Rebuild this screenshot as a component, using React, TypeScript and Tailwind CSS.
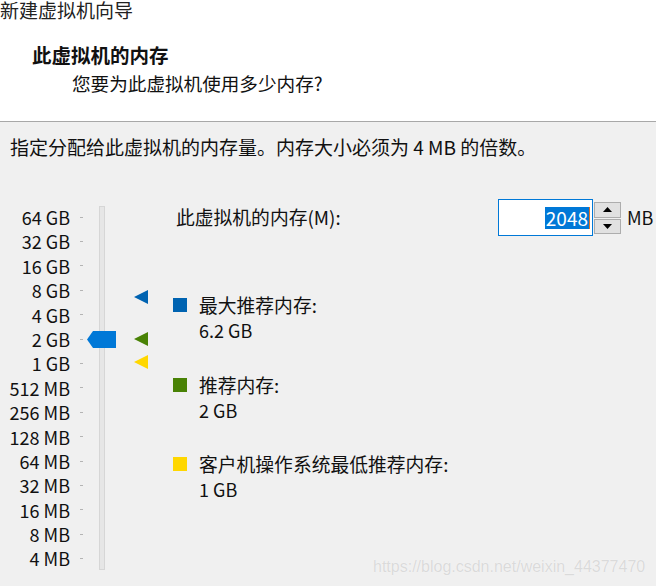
import React from "react";

const labels = [
  "64 GB", "32 GB", "16 GB", "8 GB", "4 GB", "2 GB", "1 GB",
  "512 MB", "256 MB", "128 MB", "64 MB", "32 MB", "16 MB", "8 MB", "4 MB",
];

function Tri({ color, top }: { color: string; top: number }) {
  return (
    <svg
      className="absolute left-[64px]"
      style={{ top }}
      width="14"
      height="14"
      viewBox="0 0 14 14"
    >
      <polygon points="0,7 14,0 14,14" fill={color} />
    </svg>
  );
}

function Legend({ color, title, value, mt }: { color: string; title: string; value: string; mt: string }) {
  return (
    <div className={`flex ${mt}`}>
      <div className={`w-[14px] h-[14px] mt-[5px] ${color}`} />
      <div className="ml-[12px] flex flex-col leading-[24.5px]">
        <span className="text-[18.8px] whitespace-nowrap">{title}</span>
        <span>{value}</span>
      </div>
    </div>
  );
}

export default function App() {
  return (
    <div
      className="relative w-[656px] h-[586px] overflow-hidden bg-[#f0f0f0] text-[18px] text-[#111]"
      style={{ fontFamily: '"Noto Sans CJK SC", "Noto Sans", sans-serif' }}
    >
      {/* header */}
      <div className="h-[122px] bg-white border-b border-[#a8a8a8] flex flex-col">
        <div className="leading-[20px] text-[19px] text-[#222]">新建虚拟机向导</div>
        <div className="mt-[23px] pl-[32px] leading-[24px] text-[19.5px] font-bold">此虚拟机的内存</div>
        <div className="mt-[4px] pl-[72px] leading-[24px] text-[18.6px]">您要为此虚拟机使用多少内存?</div>
      </div>

      <div className="mt-[13px] pl-[10px] leading-[24px] text-[19px] whitespace-nowrap">
        指定分配给此虚拟机的内存量。内存大小必须为 4 MB 的倍数。
      </div>

      <div className="flex mt-[45px] h-[368px]">
        {/* scale labels */}
        <div className="w-[70px] flex flex-col pt-px text-right">
          {labels.map((l) => (
            <div key={l} className="h-[24.4px] leading-[24.4px] whitespace-nowrap">
              {l}
            </div>
          ))}
        </div>

        {/* slider */}
        <div className="relative w-[103px] flex">
          <div className="flex flex-col pt-px pl-[10px]">
            {labels.map((l) => (
              <div key={l} className="h-[24.4px] flex items-center">
                <div className="w-[3px] h-px bg-[#b4b4b4]" />
              </div>
            ))}
          </div>
          <div className="ml-[16px] mt-[2px] w-[6px] h-[364px] border border-[#d6d6d6] bg-[#e6e6e6]" />
          {/* thumb */}
          <svg className="absolute left-[17px] top-[127px]" width="29" height="17" viewBox="0 0 29 17">
            <polygon points="0,8.5 6,0 29,0 29,17 6,17" fill="#0078d7" />
          </svg>
          <Tri color="#0063b1" top={86} />
          <Tri color="#498205" top={128} />
          <Tri color="#ffd700" top={151} />
        </div>

        {/* right column */}
        <div className="flex-1 flex flex-col">
          <div className="flex items-center mt-[-5px] h-[37px]">
            <div className="w-[325px] pl-[3px] whitespace-nowrap text-[18.8px]">此虚拟机的内存(M):</div>
            <div className="w-[95px] h-[37px] border border-[#0078d7] bg-white flex items-center justify-end pr-[2px]">
              <span className="bg-[#0078d7] text-white h-[22px] leading-[22px] px-px text-[19px]">2048</span>
              <span className="w-px h-[22px] bg-[#e07020]" />
            </div>
            <div className="ml-px w-[27px] h-[32px] flex flex-col gap-px">
              <div className="h-[16px] bg-[#e1e1e1] border border-[#adadad] flex items-center justify-center">
                <svg width="9" height="5" viewBox="0 0 9 5">
                  <polygon points="0,5 4.5,0 9,5" fill="#000" />
                </svg>
              </div>
              <div className="h-[15px] bg-[#e1e1e1] border border-[#adadad] flex items-center justify-center">
                <svg width="9" height="5" viewBox="0 0 9 5">
                  <polygon points="0,0 9,0 4.5,5" fill="#000" />
                </svg>
              </div>
            </div>
            <div className="ml-[6px]">MB</div>
          </div>

          <Legend color="bg-[#0063b1]" title="最大推荐内存:" value="6.2 GB" mt="mt-[57px]" />
          <Legend color="bg-[#498205]" title="推荐内存:" value="2 GB" mt="mt-[31px]" />
          <Legend color="bg-[#ffd700]" title="客户机操作系统最低推荐内存:" value="1 GB" mt="mt-[30px]" />
        </div>
      </div>

      <div
        className="absolute left-[373px] top-[557px] text-[16px] leading-[20px] text-[#dadada] whitespace-nowrap"
        style={{ fontFamily: '"Liberation Sans", Arial, sans-serif', textShadow: "0 0 1px #ffffff" }}
      >
        https://blog.csdn.net/weixin_44377470
      </div>
    </div>
  );
}
